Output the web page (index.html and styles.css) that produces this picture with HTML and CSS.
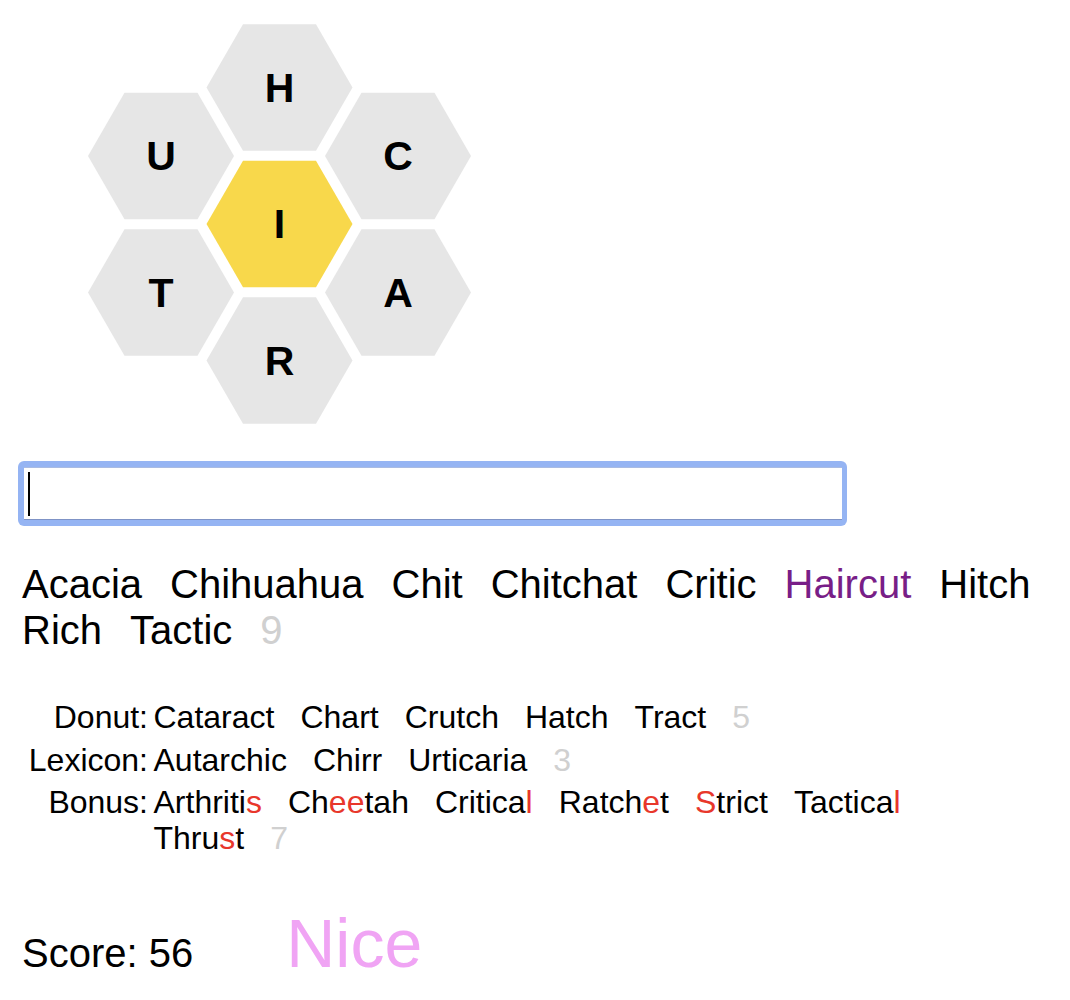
FILE: index.html
```html
<!DOCTYPE html>
<html>
<head>
<meta charset="utf-8">
<link rel="stylesheet" href="styles.css">
</head>
<body>
<svg class="hive" width="480" height="430" viewBox="0 0 480 430">
  <g transform="translate(279.5,224)"><polygon class="hex center" points="-73,0 -36.5,-63.2 36.5,-63.2 73,0 36.5,63.2 -36.5,63.2"/><text class="letter" y="14">I</text></g>
  <g transform="translate(279.5,87.5)"><polygon class="hex" points="-73,0 -36.5,-63.2 36.5,-63.2 73,0 36.5,63.2 -36.5,63.2"/><text class="letter" y="14">H</text></g>
  <g transform="translate(279.5,360.5)"><polygon class="hex" points="-73,0 -36.5,-63.2 36.5,-63.2 73,0 36.5,63.2 -36.5,63.2"/><text class="letter" y="14">R</text></g>
  <g transform="translate(161,156)"><polygon class="hex" points="-73,0 -36.5,-63.2 36.5,-63.2 73,0 36.5,63.2 -36.5,63.2"/><text class="letter" y="14">U</text></g>
  <g transform="translate(398,156)"><polygon class="hex" points="-73,0 -36.5,-63.2 36.5,-63.2 73,0 36.5,63.2 -36.5,63.2"/><text class="letter" y="14">C</text></g>
  <g transform="translate(161,292.5)"><polygon class="hex" points="-73,0 -36.5,-63.2 36.5,-63.2 73,0 36.5,63.2 -36.5,63.2"/><text class="letter" y="14">T</text></g>
  <g transform="translate(398,292.5)"><polygon class="hex" points="-73,0 -36.5,-63.2 36.5,-63.2 73,0 36.5,63.2 -36.5,63.2"/><text class="letter" y="14">A</text></g>
</svg>

<div class="input-ring">
  <div class="input-field"><span class="caret"></span></div>
</div>

<div class="found">
  <span>Acacia</span>
  <span>Chihuahua</span>
  <span>Chit</span>
  <span>Chitchat</span>
  <span>Critic</span>
  <span class="pangram">Haircut</span>
  <span>Hitch</span>
  <span>Rich</span>
  <span>Tactic</span>
  <span class="count">9</span>
</div>

<div class="extras">
  <div class="label">Donut:</div>
  <div class="words">
    <span>Cataract</span><span>Chart</span><span>Crutch</span><span>Hatch</span><span>Tract</span><span class="count">5</span>
  </div>
  <div class="label">Lexicon:</div>
  <div class="words">
    <span>Autarchic</span><span>Chirr</span><span>Urticaria</span><span class="count">3</span>
  </div>
  <div class="label">Bonus:</div>
  <div class="words">
    <span>Arthriti<b class="hl">s</b></span><span>Ch<b class="hl">ee</b>tah</span><span>Critica<b class="hl">l</b></span><span>Ratch<b class="hl">e</b>t</span><span><b class="hl">S</b>trict</span><span>Tactica<b class="hl">l</b></span><span>Thru<b class="hl">s</b>t</span><span class="count">7</span>
  </div>
</div>

<div class="score-row">
  <span class="score">Score: 56</span>
  <span class="rank">Nice</span>
</div>
</body>
</html>
```

FILE: styles.css
```css
html, body {
  margin: 0;
  padding: 0;
  background: #ffffff;
}

body {
  font-family: "Liberation Sans", Arial, sans-serif;
  color: #000000;
}

.hive {
  display: block;
}

.hex {
  fill: #e6e6e6;
}

.hex.center {
  fill: #f8d84b;
}

.letter {
  font-family: "Liberation Sans", Arial, sans-serif;
  font-weight: bold;
  font-size: 41px;
  text-anchor: middle;
  fill: #000000;
}

.input-ring {
  margin: 31px 0 0 18px;
  width: 829px;
  height: 65px;
  box-sizing: border-box;
  padding: 6px 5px 6px 6px;
  background: #95b4f3;
  border-radius: 6px;
}

.input-field {
  height: 100%;
  box-sizing: border-box;
  background: #ffffff;
  border-top: 1px solid #a9bbe3;
  border-bottom: 1px solid #7f93c6;
  padding: 4px 0 0 4px;
}

.caret {
  display: block;
  width: 2px;
  height: 44px;
  background: #000000;
}

.found {
  margin: 35px 0 0 22px;
  display: flex;
  flex-wrap: wrap;
  column-gap: 28px;
  font-size: 40px;
  line-height: 46px;
  max-width: 1040px;
}

.pangram {
  color: #781e87;
}

.count {
  color: #d0d0d0;
}

.extras {
  margin-top: 46px;
  display: grid;
  grid-template-columns: 148px 780px;
  column-gap: 5.5px;
  row-gap: 6.5px;
  font-size: 32px;
  line-height: 36px;
}

.label {
  text-align: right;
}

.words {
  display: flex;
  flex-wrap: wrap;
  column-gap: 26px;
}

.hl {
  font-weight: normal;
  color: #e8372b;
}

.score-row {
  margin: 48px 0 0 22px;
  display: flex;
  align-items: baseline;
}

.score {
  font-size: 40px;
  line-height: 46px;
}

.rank {
  margin-left: 93px;
  font-size: 68px;
  color: #f0a4f4;
}
```
